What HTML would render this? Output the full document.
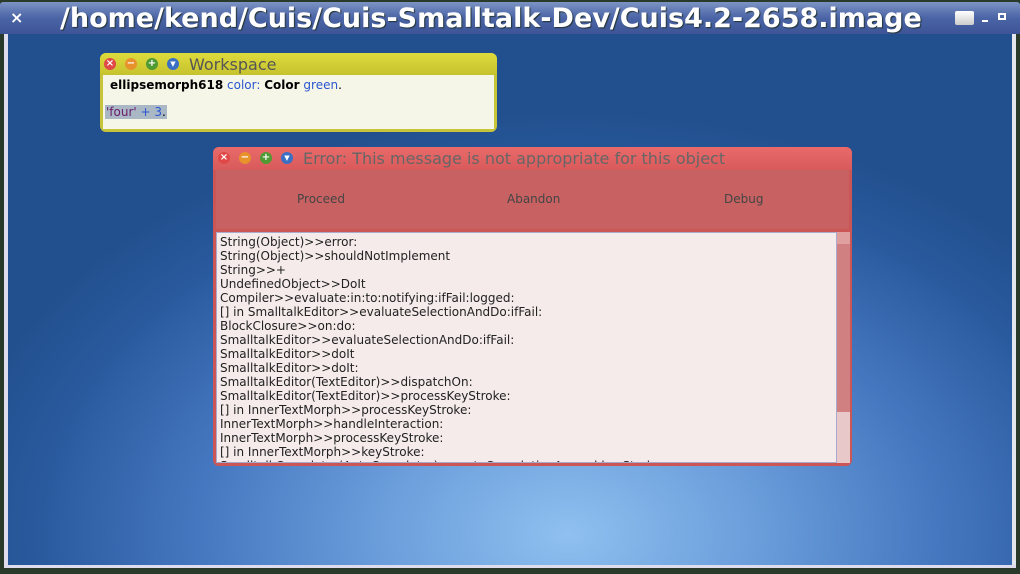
<!DOCTYPE html><html><head><style>
*{margin:0;padding:0;box-sizing:border-box}
body{width:1020px;height:574px;overflow:hidden;background:#2a3a2a;font-family:"DejaVu Sans","Liberation Sans",sans-serif;position:relative}
#tb{position:absolute;left:0;top:2px;width:1020px;height:32px;background:linear-gradient(#7d93c4,#4a64a6 50%,#3d5597);color:#fff;border-radius:3px 3px 0 0}
#tb .t{position:absolute;left:60px;top:0;font-weight:bold;font-size:27px;line-height:34px;text-shadow:1px 1px 1px #233}
#desk{position:absolute;left:8px;top:34px;width:1004px;height:531px;background:radial-gradient(ellipse 620px 420px at 560px 500px,#8fc0f0,#6b9edb 30%,#4577c0 60%,#2a5a9e 85%,#22508f 100%)}
#lb{position:absolute;left:4px;top:34px;width:4px;height:531px;background:#dde}
#rb{position:absolute;left:1012px;top:34px;width:4px;height:531px;background:#e4e6ee}
#bb{position:absolute;left:4px;top:565px;width:1012px;height:3px;background:#dde}
.win{position:absolute;border-radius:6px}
.btn{position:absolute;width:12px;height:12px;border-radius:50%;top:5px;color:#fff;font-size:10px;line-height:12px;text-align:center;font-weight:bold}
</style></head><body>
<div id="tb"><span style="position:absolute;left:10px;top:6px;font-size:16px;font-weight:bold">×</span><span class="t">/home/kend/Cuis/Cuis-Smalltalk-Dev/Cuis4.2-2658.image</span>
<div style="position:absolute;left:955px;top:9px;width:19px;height:14px;background:linear-gradient(#fff,#ccc);border-radius:2px"></div>
<div style="position:absolute;left:982px;top:18px;width:6px;height:2px;background:#fff"></div>
<div style="position:absolute;left:998px;top:11px;width:8px;height:7px;border:2px solid #fff"></div></div>
<div id="lb"></div><div id="desk"></div><div id="rb"></div><div id="bb"></div>

<div class="win" style="left:100px;top:53px;width:397px;height:79px;background:#c8c43a">
<div style="height:22px;background:linear-gradient(#dedb3c,#c6c22e);border-radius:6px 6px 0 0"></div>
<div class="btn" style="left:4px;background:#e04848">×</div><div class="btn" style="left:25px;background:#e8922c">−</div><div class="btn" style="left:46px;background:#4f9a32">+</div><div class="btn" style="left:67px;background:#3a6fc4;font-size:7px">▼</div>
<div style="position:absolute;left:89px;top:2px;font-size:16px;color:#555">Workspace</div>
<div style="position:absolute;left:3px;top:22px;width:391px;height:54px;background:#f5f5e8;font-size:12px">
<div style="position:absolute;left:7px;top:3px"><b>ellipsemorph618</b> <span style="color:#2a55d0">color:</span> <b>Color</b> <span style="color:#2a55d0">green</span>.</div>
<div style="position:absolute;left:2px;top:30px;background:#aab8c6;padding:0 1px"><span style="color:#6a1a6a">'four'</span> <span style="color:#2a55d0">+ 3</span>.</div></div></div>

<div class="win" style="left:213px;top:147px;width:639px;height:319px;background:#cc5555">
<div style="height:23px;background:linear-gradient(#ea6a6a,#d85a5a);border-radius:6px 6px 0 0"></div>
<div class="btn" style="left:5px;background:#e04848">×</div><div class="btn" style="left:26px;background:#e8922c">−</div><div class="btn" style="left:47px;background:#4f9a32">+</div><div class="btn" style="left:68px;background:#3a6fc4;font-size:7px">▼</div>
<div style="position:absolute;left:90px;top:2px;font-size:16px;color:#666">Error: This message is not appropriate for this object</div>
<div style="position:absolute;left:3px;top:23px;width:633px;height:59px;background:#c86262;font-size:12px;color:#444">
<span style="position:absolute;left:81px;top:22px">Proceed</span><span style="position:absolute;left:291px;top:22px">Abandon</span><span style="position:absolute;left:508px;top:22px">Debug</span></div>
<div style="position:absolute;left:3px;top:85px;width:621px;height:231px;background:#f5ebeb;overflow:hidden;font-size:12px;line-height:14px;color:#222;padding:2px 0 0 3px;border:1px solid #aac">
String(Object)&gt;&gt;error:<br>String(Object)&gt;&gt;shouldNotImplement<br>String&gt;&gt;+<br>UndefinedObject&gt;&gt;DoIt<br>Compiler&gt;&gt;evaluate:in:to:notifying:ifFail:logged:<br>[] in SmalltalkEditor&gt;&gt;evaluateSelectionAndDo:ifFail:<br>BlockClosure&gt;&gt;on:do:<br>SmalltalkEditor&gt;&gt;evaluateSelectionAndDo:ifFail:<br>SmalltalkEditor&gt;&gt;doIt<br>SmalltalkEditor&gt;&gt;doIt:<br>SmalltalkEditor(TextEditor)&gt;&gt;dispatchOn:<br>SmalltalkEditor(TextEditor)&gt;&gt;processKeyStroke:<br>[] in InnerTextMorph&gt;&gt;processKeyStroke:<br>InnerTextMorph&gt;&gt;handleInteraction:<br>InnerTextMorph&gt;&gt;processKeyStroke:<br>[] in InnerTextMorph&gt;&gt;keyStroke:<br>SmalltalkCompleter(AutoCompleter)&gt;&gt;autoCompletionAround:keyStroke:</div>
<div style="position:absolute;left:624px;top:85px;width:13px;height:231px;background:#e8c8c8">
<div style="height:180px;background:#d08080;border-top:12px solid #e0a0a0"></div></div>
</div>
</body></html>
